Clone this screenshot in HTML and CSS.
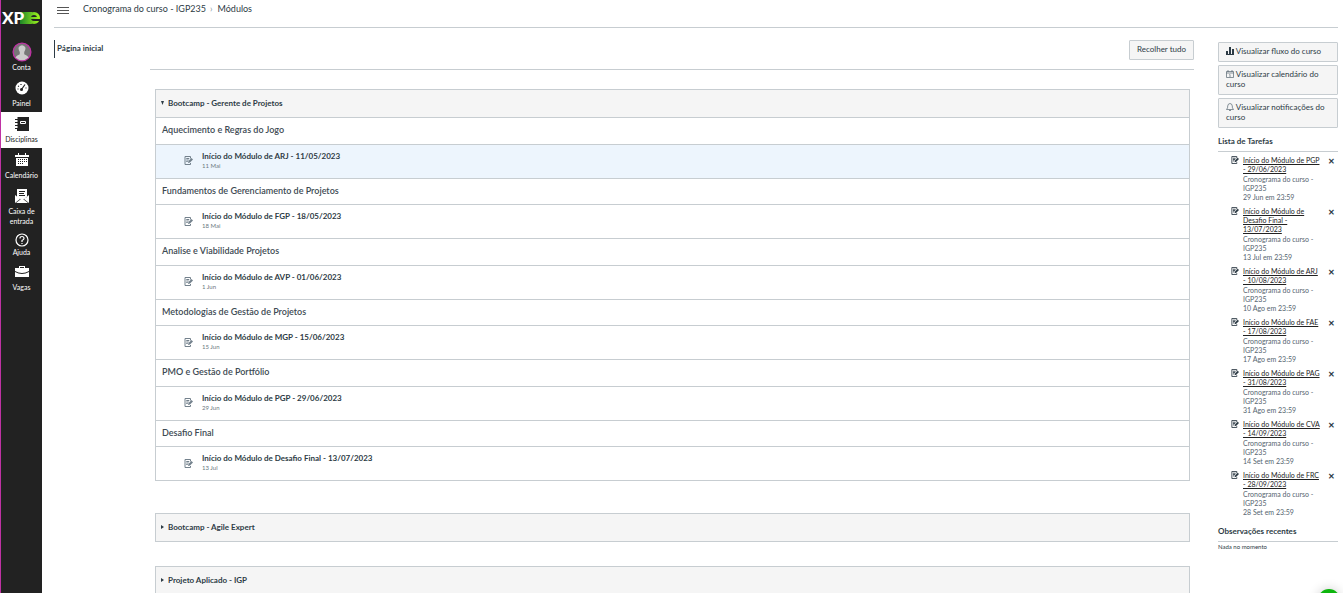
FILE: index.html
```html
<!DOCTYPE html>
<html lang="pt-BR">
<head>
<meta charset="utf-8">
<title>Módulos</title>
<link rel="stylesheet" href="styles.css">
</head>
<body>
<svg class="defs" aria-hidden="true">
  <symbol id="assignment" viewBox="0 0 18 18"><path d="M13 5V1H2v16h11v-3M4.500 5h6M4.500 8h5M4.500 11h3" fill="none" stroke="currentColor" stroke-width="2"/><path d="M8 14l1-4 6-6 3 3-6 6z" fill="currentColor"/></symbol>
</svg>
<div class="app">
  <nav class="rail">
    <a class="logo" href="#" aria-label="XPe"><svg viewBox="0 0 41 20"><defs><linearGradient id="g" gradientUnits="userSpaceOnUse" x1="17" y1="0" x2="39" y2="0"><stop offset="0" stop-color="#0f7a2a"/><stop offset="1" stop-color="#a4fa1c"/></linearGradient></defs><path d="M19 4h13q-4 2-4 6t4 6H19z" fill="url(#g)"/><circle cx="33" cy="10" r="4.500" fill="none" stroke="url(#g)" stroke-width="3"/><path d="M28 9h10v2H28z" fill="url(#g)"/><path d="M32 11h8v2h-6z" fill="#222"/><text x="1" y="16">XP</text></svg></a>
    <a class="nav-item" href="#"><svg class="avatar" viewBox="0 0 18 18"><circle cx="9" cy="9" r="8" fill="#777" stroke="#bf32a4" stroke-width="1.200"/><path d="M3 14q1-2 4-3V9Q4 4 9 3q5 1 2 6v2q3 1 4 3-6 5-12 0z" fill="#ccc"/></svg><span>Conta</span></a>
    <a class="nav-item" href="#"><svg viewBox="0 0 14 14"><circle cx="7" cy="7" r="6.500" fill="#fff"/><path d="M6.500 8.500L10 3.500M2.500 8h1M3 5l1 .5M6 3v1M11.500 7h-1" stroke="#222" stroke-width="1.200"/><circle cx="6.500" cy="8.500" r="1.500" fill="#222"/></svg><span>Painel</span></a>
    <a class="nav-item active" href="#"><svg viewBox="0 0 14 14"><path d="M2 0h12v14H2zM0 2h3v1H0zM0 5h3v1H0zM0 8h3v1H0zM0 11h3v1H0z" fill="#222"/><path d="M5.500 4.500h5v2h-5z" fill="none" stroke="#fff"/><path d="M2 1h1M2 4h1M2 7h1M2 10h1" stroke="#fff"/></svg><span>Disciplinas</span></a>
    <a class="nav-item" href="#"><svg viewBox="0 0 14 14"><path d="M0 2h14v2H0zM1 5h12v8H1zM3 0h1v3H3zM10 0h1v3h-1z" fill="#fff"/><path d="M3 6.500h9M3 8.500h9M3 10.500h6" stroke="#222" stroke-dasharray="1 1"/></svg><span>Calendário</span></a>
    <a class="nav-item mail" href="#"><svg viewBox="0 0 14 14"><path d="M2 0h10v8l-5 3-5-3zM0 6l5 4-5 4zM14 6l-5 4 5 4zM1 14l5-4 1 1 1-1 5 4z" fill="#fff"/><path d="M4 2.500h6M4 4.500h5M4 6.500h6" stroke="#222"/></svg><span>Caixa de entrada</span></a>
    <a class="nav-item help" href="#"><svg viewBox="0 0 14 14"><circle cx="7" cy="7" r="6" fill="none" stroke="#fff" stroke-width="1.200"/><path d="M5 5.500Q5 3.500 7 3.500T9 5.500Q9 6.500 7 7.500V9M7 10v1" fill="none" stroke="#fff" stroke-width="1.200"/></svg><span>Ajuda</span></a>
    <a class="nav-item" href="#"><svg viewBox="0 0 14 14"><path d="M4 3V1h6v2h4v3Q7 10 0 6V3zM5 3h4V2H5zM0 7q7 4 14 0v5H0z" fill="#fff" fill-rule="evenodd"/></svg><span>Vagas</span></a>
  </nav>
  <div class="page">
    <header class="topbar">
      <button class="burger" aria-label="Menu"><span></span><span></span><span></span></button>
      <a href="#">Cronograma do curso - IGP235</a><span class="sep">›</span><span>Módulos</span>
    </header>
    <div class="columns">
      <nav class="course-nav"><a href="#">Página inicial</a></nav>
      <main class="content">
        <div class="toolbar"><button class="btn">Recolher tudo</button></div>
        <div class="modules">
          <section class="module">
            <button class="module-head open">Bootcamp - Gerente de Projetos</button>
            <h3>Aquecimento e Regras do Jogo</h3>
            <div class="item current"><svg><use href="#assignment"/></svg><div><a href="#">Início do Módulo de ARJ - 11/05/2023</a><small>11 Mai</small></div></div>
            <h3>Fundamentos de Gerenciamento de Projetos</h3>
            <div class="item"><svg><use href="#assignment"/></svg><div><a href="#">Início do Módulo de FGP - 18/05/2023</a><small>18 Mai</small></div></div>
            <h3>Analise e Viabilidade Projetos</h3>
            <div class="item"><svg><use href="#assignment"/></svg><div><a href="#">Início do Módulo de AVP - 01/06/2023</a><small>1 Jun</small></div></div>
            <h3>Metodologias de Gestão de Projetos</h3>
            <div class="item"><svg><use href="#assignment"/></svg><div><a href="#">Início do Módulo de MGP - 15/06/2023</a><small>15 Jun</small></div></div>
            <h3>PMO e Gestão de Portfólio</h3>
            <div class="item"><svg><use href="#assignment"/></svg><div><a href="#">Início do Módulo de PGP - 29/06/2023</a><small>29 Jun</small></div></div>
            <h3>Desafio Final</h3>
            <div class="item"><svg><use href="#assignment"/></svg><div><a href="#">Início do Módulo de Desafio Final - 13/07/2023</a><small>13 Jul</small></div></div>
          </section>
          <section class="module"><button class="module-head">Bootcamp - Agile Expert</button></section>
          <section class="module"><button class="module-head">Projeto Aplicado - IGP</button></section>
        </div>
      </main>
      <aside class="side">
        <div class="actions">
          <button class="btn"><svg viewBox="0 0 8 8"><path d="M0 4h2v3H0zM3 0h2v7H3zM6 2h2v5H6zM0 7h8v1H0z" fill="#2d3b45"/></svg> Visualizar fluxo do curso</button>
          <button class="btn"><svg viewBox="0 0 8 8"><path d="M.5 1.500h7v6h-7zM.5 3h7M2 0v2M6 0v2M3.500 4.500H4V7" fill="none" stroke="#566570" stroke-width=".7"/></svg> Visualizar calendário do curso</button>
          <button class="btn"><svg viewBox="0 0 8 8"><path d="M.5 6.500Q2 5 1.700 3 2 .5 4 .5T6.300 3Q6 5 7.500 6.500zM3 7.500h2" fill="none" stroke="#566570" stroke-width=".7"/></svg> Visualizar notificações do curso</button>
        </div>
        <h2>Lista de Tarefas</h2>
        <ul class="todo">
          <li><svg><use href="#assignment"/></svg><div><a href="#">Início do Módulo de PGP - 29/06/2023</a><p>Cronograma do curso - IGP235</p><p>29 Jun em 23:59</p></div><button aria-label="Ignorar">✕</button></li>
          <li><svg><use href="#assignment"/></svg><div><a href="#">Início do Módulo de Desafio Final - 13/07/2023</a><p>Cronograma do curso - IGP235</p><p>13 Jul em 23:59</p></div><button aria-label="Ignorar">✕</button></li>
          <li><svg><use href="#assignment"/></svg><div><a href="#">Início do Módulo de ARJ - 10/08/2023</a><p>Cronograma do curso - IGP235</p><p>10 Ago em 23:59</p></div><button aria-label="Ignorar">✕</button></li>
          <li><svg><use href="#assignment"/></svg><div><a href="#">Início do Módulo de FAE - 17/08/2023</a><p>Cronograma do curso - IGP235</p><p>17 Ago em 23:59</p></div><button aria-label="Ignorar">✕</button></li>
          <li><svg><use href="#assignment"/></svg><div><a href="#">Início do Módulo de PAG - 31/08/2023</a><p>Cronograma do curso - IGP235</p><p>31 Ago em 23:59</p></div><button aria-label="Ignorar">✕</button></li>
          <li><svg><use href="#assignment"/></svg><div><a href="#">Início do Módulo de CVA - 14/09/2023</a><p>Cronograma do curso - IGP235</p><p>14 Set em 23:59</p></div><button aria-label="Ignorar">✕</button></li>
          <li><svg><use href="#assignment"/></svg><div><a href="#">Início do Módulo de FRC - 28/09/2023</a><p>Cronograma do curso - IGP235</p><p>28 Set em 23:59</p></div><button aria-label="Ignorar">✕</button></li>
        </ul>
        <h2>Observações recentes</h2>
        <p class="none">Nada no momento</p>
      </aside>
    </div>
  </div>
</div>
<button class="chat" aria-label="Chat"></button>
</body>
</html>
```
FILE: styles.css
```css
* { box-sizing: border-box; }
body { margin: 0; font: 8px/10px Lato, sans-serif; color: #2d3b45; background: #fff; height: 100vh; overflow: hidden; }
a { color: inherit; text-decoration: none; }
button { font: inherit; color: inherit; }
h2, h3, p, ul { margin: 0; padding: 0; }
.defs { display: none; }
.app { display: flex; height: 100vh; }

.rail { flex: 0 0 42px; background: #222; border-left: 1px solid #bf32a4; color: #fff; font-size: 7px; }
.logo { display: block; height: 40px; padding-top: 8px; }
.logo svg { display: block; width: 41px; height: 20px; }
.logo text { font: 900 17px Lato, sans-serif; fill: #fff; }
.nav-item { display: flex; flex-direction: column; align-items: center; gap: 3px; padding: 5px 4px 4px; text-align: center; }
.nav-item svg { width: 14px; height: 14px; }
.nav-item .avatar { width: 20px; height: 20px; margin: -3px; }
.nav-item.active { background: #fff; color: #222; }
.nav-item.mail { padding-bottom: 2px; }
.nav-item.help { gap: 0; padding-bottom: 3px; }

.page { flex: 1; min-width: 0; padding: 0 5px 0 12px; }
.topbar { display: flex; align-items: center; height: 28px; padding: 0 0 10px 3px; border-bottom: 1px solid #c7cdd1; font-size: 9px; }
.burger { display: grid; gap: 2px; width: 12px; margin: 3px 14px 0 0; padding: 0; border: 0; background: none; }
.burger span { height: 1px; background: #555; }
.sep { margin: 0 5px 0 4px; color: #8b969e; }
.columns { display: flex; }
.course-nav { flex: 0 0 96px; padding-top: 12px; font-weight: 700; }
.course-nav a { display: block; padding: 3px 2px 5px; border-left: 1px solid #2d3b45; }
.content { flex: 1; min-width: 0; }
.toolbar { display: flex; justify-content: flex-end; padding: 12px 0 9px; border-bottom: 1px solid #c7cdd1; }
.btn { padding: 3px 7px 5px; border: 1px solid #c7cdd1; border-radius: 1px; background: #f5f5f5; text-align: left; }
.modules { padding: 19px 4px 0 5px; }
.module { border: 1px solid #c7cdd1; margin-bottom: 32px; }
.module + .module { margin-bottom: 24px; }
.module-head { display: block; width: 100%; padding: 8px 5px 9px; border: 0; background: #f5f5f5; text-align: left; font-weight: 700; }
.module-head::before { content: ""; display: inline-block; width: 3px; height: 4px; margin-right: 4px; vertical-align: 1px; background: #2d3b45; clip-path: polygon(0 0, 100% 50%, 0 100%); }
.module-head.open::before { clip-path: polygon(0 0, 100% 0, 50% 100%); }
h3 { padding: 5px 6px 7px; border-top: 1px solid #c7cdd1; color: #3d4a53; font-size: 9px; font-weight: 600; line-height: 1.5; }
.item { display: flex; align-items: center; gap: 9px; padding: 6px 28px 7px; border-top: 1px solid #c7cdd1; font-weight: 700; }
.item svg { width: 9px; height: 9px; color: #73818c; }
.item a, .item small { display: block; }
.item small { font-size: 6px; font-weight: 400; color: #6b7780; }
.item.current { background: #edf5fd; }

.side { flex: 0 0 120px; margin-left: 24px; padding-top: 14px; }
.actions { display: grid; gap: 3px; margin-bottom: 8px; }
.side .btn svg { width: 8px; height: 8px; vertical-align: -1px; }
h2 { padding-bottom: 5px; border-bottom: 1px solid #c7cdd1; font-size: 8px; }
.todo { list-style: none; padding: 4px 3px 0 13px; margin-bottom: 4px; font-size: 7px; line-height: 9px; }
.todo li { display: flex; gap: 4px; padding-bottom: 5px; }
.todo svg { flex: none; width: 8px; height: 8px; }
.todo div { flex: 1; padding-right: 3px; }
.todo a { display: block; margin-bottom: 1px; color: #222; text-decoration: underline; }
.todo p { color: #566570; }
.todo button { align-self: flex-start; padding: 1px 0; border: 0; background: none; font-size: 8px; font-weight: 700; line-height: 9px; }
.none { font-size: 6px; }
.chat { position: fixed; right: 3px; bottom: -18px; width: 22px; height: 22px; border: 0; border-radius: 50%; background: #0db50d; box-shadow: 0 0 12px #0003; }
```
